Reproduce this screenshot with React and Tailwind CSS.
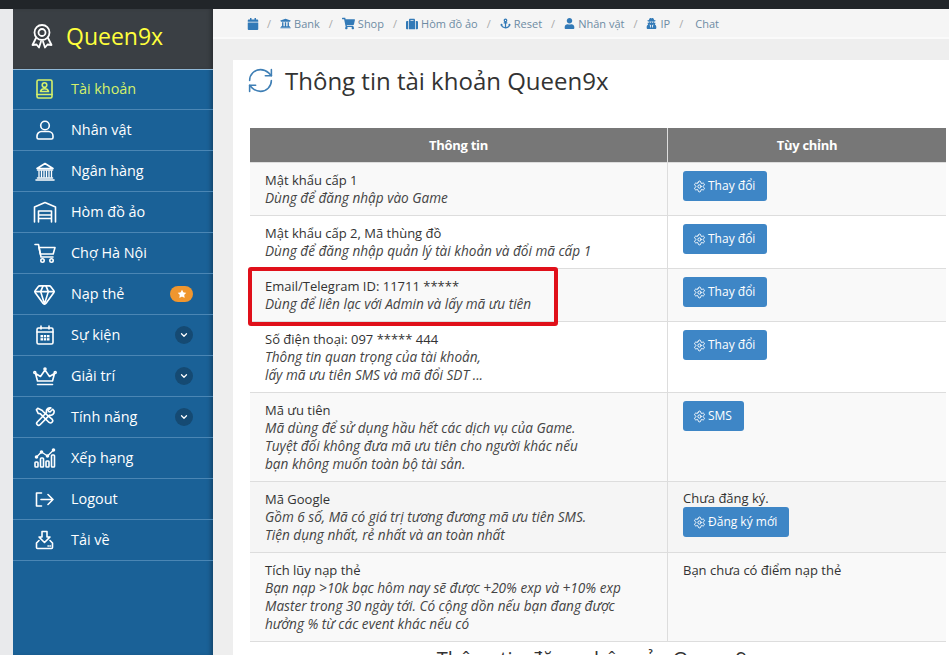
import { Settings, RefreshCw, Gem, ChevronDown, Star } from 'lucide-react';
import { FaCalendar, FaUniversity, FaShoppingCart, FaSuitcase, FaAnchor, FaUser, FaUserSecret } from 'react-icons/fa';

const stroke = { fill: 'none', stroke: 'currentColor', strokeWidth: 1.6, strokeLinecap: 'round', strokeLinejoin: 'round' };

const AwardIcon = () => (
  <svg width="24" height="26" viewBox="0 0 24 26" {...stroke} strokeWidth="1.8">
    <circle cx="12" cy="9.5" r="7.5" />
    <circle cx="12" cy="9.5" r="3.5" />
    <path d="M6 15 2.500 22l4-.5L9 24.500l2-6M18 15l3.500 7-4-.5-2.500 3-2-6" />
  </svg>
);

const AccountIcon = () => (
  <svg width="17" height="20" viewBox="0 0 17 20" {...stroke}>
    <rect x="1" y="1" width="15" height="18" rx="1.500" />
    <path d="M1 15.500h15" />
    <circle cx="8.500" cy="6" r="2.300" />
    <path d="M4.500 12.500c.4-2 1.800-2.700 4-2.700s3.600.7 4 2.700z" />
  </svg>
);

const UserIcon = () => (
  <svg width="18" height="20" viewBox="0 0 18 20" {...stroke}>
    <circle cx="9" cy="5.500" r="4.300" />
    <path d="M1 17.500v-1.500a4.500 4.500 0 0 1 4.500-4.500h7A4.500 4.500 0 0 1 17 16v1.500a1.500 1.500 0 0 1-1.500 1.500h-13A1.500 1.500 0 0 1 1 17.500z" />
  </svg>
);

const BankIcon = () => (
  <svg width="20" height="19" viewBox="0 0 20 19" {...stroke}>
    <path d="M2 6.500 10 1.500l8 5z" />
    <path d="M4 9v6M6.500 9v6M9 9v6M11.500 9v6M14 9v6M16.500 9v6" strokeWidth="1.300" />
    <path d="M2.500 8h15M2.500 16h15M1 18h18" />
  </svg>
);

const GarageIcon = () => (
  <svg width="24" height="22" viewBox="0 0 24 22" {...stroke}>
    <path d="M1.500 21V6l10.500-4.500L22.500 6v15" />
    <path d="M5.500 21V10h13v11M5.500 14h13M5.500 17.500h13" />
  </svg>
);

const CartIcon = () => (
  <svg width="22" height="20" viewBox="0 0 22 20" {...stroke}>
    <path d="M1 1.500h3.500L7 14h12" />
    <path d="M5 4.500h16l-1.800 6.500H6.300z" />
    <circle cx="8.500" cy="17.500" r="1.700" />
    <circle cx="17.500" cy="17.500" r="1.700" />
  </svg>
);

const CalendarIcon = () => (
  <svg width="18" height="20" viewBox="0 0 18 20" {...stroke}>
    <rect x="1" y="3" width="16" height="16" rx="1.500" />
    <path d="M1 7h16M5 1v3M13 1v3" />
    <path d="M4.500 10h9v5.500h-9z" fill="currentColor" stroke="none" />
    <path d="M7.500 10v5.500M10.500 10v5.500M4.500 12.700h9" stroke="#1a6197" strokeWidth="0.800" />
  </svg>
);

const CrownIcon = () => (
  <svg width="24" height="19" viewBox="0 0 24 19" {...stroke}>
    <path d="M4.500 14 2.500 6.500 7.500 9.500 12 3l4.500 6.500 5-3-2 7.500z" />
    <path d="M4.500 17.500h15" />
    <circle cx="12" cy="2" r="1" />
    <circle cx="1.800" cy="5.500" r="1" />
    <circle cx="22.200" cy="5.500" r="1" />
  </svg>
);

const ToolsIcon = () => (
  <svg width="20" height="20" viewBox="0 0 22 22" {...stroke} strokeWidth="1.800">
    <path d="M3 1.500 1.500 3l2 4 2.500.5L15.500 17a2.500 2.500 0 0 0 3.500-3.500L9 5 7.500 3.500z" />
    <path d="M19.500 2.500 16.500 5.500l-1.500-.5-.5-1.500 3-2.500c-2.500-.5-5 1-5 3.500 0 .5 0 1 .2 1.500L2.500 16.500a2.100 2.100 0 0 0 3 3L16 9c2.800.8 5.500-1.500 5-4.500z" />
  </svg>
);

const ChartIcon = () => (
  <svg width="22" height="20" viewBox="0 0 22 20" {...stroke}>
    <path d="M2.500 9l5-5 6 4 6-6" strokeWidth="1.300" />
    <circle cx="2.500" cy="9" r="1" fill="currentColor" />
    <circle cx="7.500" cy="4" r="1" fill="currentColor" />
    <circle cx="13.500" cy="8" r="1" fill="currentColor" />
    <circle cx="19.500" cy="2" r="1" fill="currentColor" />
    <rect x="1" y="14" width="3" height="5" rx=".8" />
    <rect x="6.500" y="10" width="3" height="9" rx=".8" />
    <rect x="12" y="13" width="3" height="6" rx=".8" />
    <rect x="17.500" y="7" width="3" height="12" rx=".8" />
  </svg>
);

const LogoutIcon = () => (
  <svg width="19" height="15" viewBox="0 0 19 15" {...stroke}>
    <path d="M6.500 1H1.500v13h5" />
    <path d="M6 7.500h12M13 2.500l5 5-5 5" />
  </svg>
);

const DownloadIcon = () => (
  <svg width="19" height="20" viewBox="0 0 19 20" {...stroke}>
    <path d="M7 1.500h5v5.500h3L9.500 12.500 4 7h3z" />
    <path d="M4 10.500 1.500 13v4.500a1 1 0 0 0 1 1h14a1 1 0 0 0 1-1V13L15 10.500" />
    <path d="M13 16h.5M15 16h.5" />
  </svg>
);

const menu = [
  { label: 'Tài khoản', icon: <AccountIcon />, active: true },
  { label: 'Nhân vật', icon: <UserIcon /> },
  { label: 'Ngân hàng', icon: <BankIcon /> },
  { label: 'Hòm đồ ảo', icon: <GarageIcon /> },
  { label: 'Chợ Hà Nội', icon: <CartIcon /> },
  { label: 'Nạp thẻ', icon: <Gem size={23} strokeWidth={1.7} />, star: true },
  { label: 'Sự kiện', icon: <CalendarIcon />, more: true },
  { label: 'Giải trí', icon: <CrownIcon />, more: true },
  { label: 'Tính năng', icon: <ToolsIcon />, more: true },
  { label: 'Xếp hạng', icon: <ChartIcon /> },
  { label: 'Logout', icon: <LogoutIcon /> },
  { label: 'Tải về', icon: <DownloadIcon /> },
];

const crumbs = [
  { label: '', icon: <FaCalendar size={12} /> },
  { label: 'Bank', icon: <FaUniversity size={11} /> },
  { label: 'Shop', icon: <FaShoppingCart size={13} /> },
  { label: 'Hòm đồ ảo', icon: <FaSuitcase size={12} /> },
  { label: 'Reset', icon: <FaAnchor size={11} /> },
  { label: 'Nhân vật', icon: <FaUser size={11} /> },
  { label: 'IP', icon: <FaUserSecret size={11} /> },
];

const Btn = ({ children }) => (
  <button className="h-[30px] pl-[10px] pr-[12px] rounded-[3px] bg-[#3e86c6] text-white text-[12px] flex items-center gap-[2px]">
    <Settings size={13} strokeWidth={1.8} />
    {children}
  </button>
);

const rows = [
  {
    title: 'Mật khẩu cấp 1',
    desc: ['Dùng để đăng nhập vào Game'],
    bg: 'bg-[#f9f9f9]',
    right: <Btn>Thay đổi</Btn>,
  },
  {
    title: 'Mật khẩu cấp 2, Mã thùng đồ',
    desc: ['Dùng để đăng nhập quản lý tài khoản và đổi mã cấp 1'],
    bg: 'bg-white',
    right: <Btn>Thay đổi</Btn>,
  },
  {
    title: 'Email/Telegram ID: 11711 *****',
    desc: ['Dùng để liên lạc với Admin và lấy mã ưu tiên'],
    bg: 'bg-[#f9f9f9]',
    right: <Btn>Thay đổi</Btn>,
  },
  {
    title: 'Số điện thoại: 097 ***** 444',
    desc: ['Thông tin quan trọng của tài khoản,', 'lấy mã ưu tiên SMS và mã đổi SDT ...'],
    bg: 'bg-white',
    right: <Btn>Thay đổi</Btn>,
  },
  {
    title: 'Mã ưu tiên',
    desc: ['Mã dùng để sử dụng hầu hết các dịch vụ của Game.', 'Tuyệt đối không đưa mã ưu tiên cho người khác nếu', 'bạn không muốn toàn bộ tài sản.'],
    bg: 'bg-[#f9f9f9]',
    right: <Btn>SMS</Btn>,
  },
  {
    title: 'Mã Google',
    desc: ['Gồm 6 số, Mã có giá trị tương đương mã ưu tiên SMS.', 'Tiện dụng nhất, rẻ nhất và an toàn nhất'],
    bg: 'bg-[#f5f5f5]',
    right: (
      <>
        <div className="-mt-px h-[18px]">Chưa đăng ký.</div>
        <Btn>Đăng ký mới</Btn>
      </>
    ),
  },
  {
    title: 'Tích lũy nạp thẻ',
    desc: ['Bạn nạp >10k bạc hôm nay sẽ được +20% exp và +10% exp', 'Master trong 30 ngày tới. Có cộng dồn nếu bạn đang được', 'hưởng % từ các event khác nếu có'],
    bg: 'bg-[#f9f9f9]',
    right: <div>Bạn chưa có điểm nạp thẻ</div>,
  },
];

export default function App() {
  return (
    <div className="h-[655px] overflow-hidden flex flex-col bg-[#eeeeee] text-[13px] leading-[18px] text-[#333] font-['Open_Sans',sans-serif]">
      <div className="h-[9px] shrink-0 bg-[#212529]" />
      <div className="flex flex-1 min-h-0">
        <div className="w-[13px] shrink-0 bg-[#e9eaec]" />
        <aside className="w-[200px] shrink-0 bg-[#1a6197] text-white shadow-[inset_-4px_0_4px_-2px_rgba(0,0,0,0.3)]">
          <div className="h-[60px] bg-[#3a3f44] flex items-center pl-[17px] pb-[6px] shadow-[inset_-4px_0_4px_-2px_rgba(0,0,0,0.3)]">
            <AwardIcon />
            <span className="ml-[12px] text-[23px] text-[#ffff3c] leading-none">Queen9x</span>
          </div>
          {menu.map((item) => (
            <div key={item.label} className={`h-[41px] flex items-center border-b text-[14.4px] ${item.active ? 'border-t border-t-[#8fb8d8] border-b-[#4b86b4] pb-px text-[#d5f06a]' : 'border-[#4b86b4] text-white'}`}>
              <span className="w-[58px] pl-[12px] pr-[7px] shrink-0 flex justify-center">{item.icon}</span>
              <span className="flex-1">{item.label}</span>
              {item.star && (
                <span className="mr-[20px] w-[23px] h-[16px] rounded-full bg-[#f0962e] flex items-center justify-center">
                  <Star size={10} fill="white" strokeWidth={0} />
                </span>
              )}
              {item.more && (
                <span className="mr-[20px] w-[18px] h-[18px] rounded-full bg-[#154a73] flex items-center justify-center">
                  <ChevronDown size={10} strokeWidth={3} />
                </span>
              )}
            </div>
          ))}
        </aside>
        <main className="flex-1 min-w-0">
          <nav className="h-[30px] bg-[#f5f5f5] border-b-2 border-[#fafafa] flex items-center pl-[34px] pt-[1px] text-[11px] text-[#6d8ba3]">
            {crumbs.map((c) => (
              <span key={c.label} className="flex items-center">
                <span className={`text-[#337ab7] ${c.label ? 'mr-[3px]' : ''}`}>{c.icon}</span>
                {c.label}
                <span className={`${c.label ? 'ml-[9px]' : 'ml-[8px]'} mr-[9px] text-[#aaa]`}>/</span>
              </span>
            ))}
            <span className="ml-[3px]">Chat</span>
          </nav>
          <section className="mt-[21px] ml-[20px] bg-white pl-[17px] pr-[3px] h-[600px]">
            <div className="flex items-center h-[41px] -ml-[4px]">
              <RefreshCw size={29} strokeWidth={1.3} className="text-[#3f7fb5]" />
              <h1 className="ml-[10px] text-[24px] leading-none text-[#333]">Thông tin tài khoản Queen9x</h1>
            </div>
            <div className="relative mt-[27px]">
              <div className="flex h-[34px] bg-[#777] text-white text-[13px] font-bold tracking-[-0.3px]">
                <div className="w-[417px] flex items-center justify-center">Thông tin</div>
                <div className="flex-1 border-l border-[#ddd] flex items-center justify-center">Tùy chỉnh</div>
              </div>
              {rows.map((r) => (
                <div key={r.title} className={`flex border-t border-[#ddd] ${r.bg}`}>
                  <div className="w-[417px] px-[15px] py-[8px]">
                    <div>{r.title}</div>
                    {r.desc.map((d) => <div key={d} className="italic text-[13.6px] text-[#444]">{d}</div>)}
                  </div>
                  <div className="flex-1 border-l border-[#ddd] px-[15px] py-[8px]">{r.right}</div>
                </div>
              ))}
              <div className="border-t border-[#ddd] text-center text-[20px] leading-[24px] pt-[5px] pr-[2px]">Thông tin đăng nhập của Queen9x</div>
              <div className="absolute left-[-2px] top-[139px] w-[310px] h-[59px] border-[4px] border-[#e0101a] rounded-[3px]" />
            </div>
          </section>
        </main>
      </div>
    </div>
  );
}
